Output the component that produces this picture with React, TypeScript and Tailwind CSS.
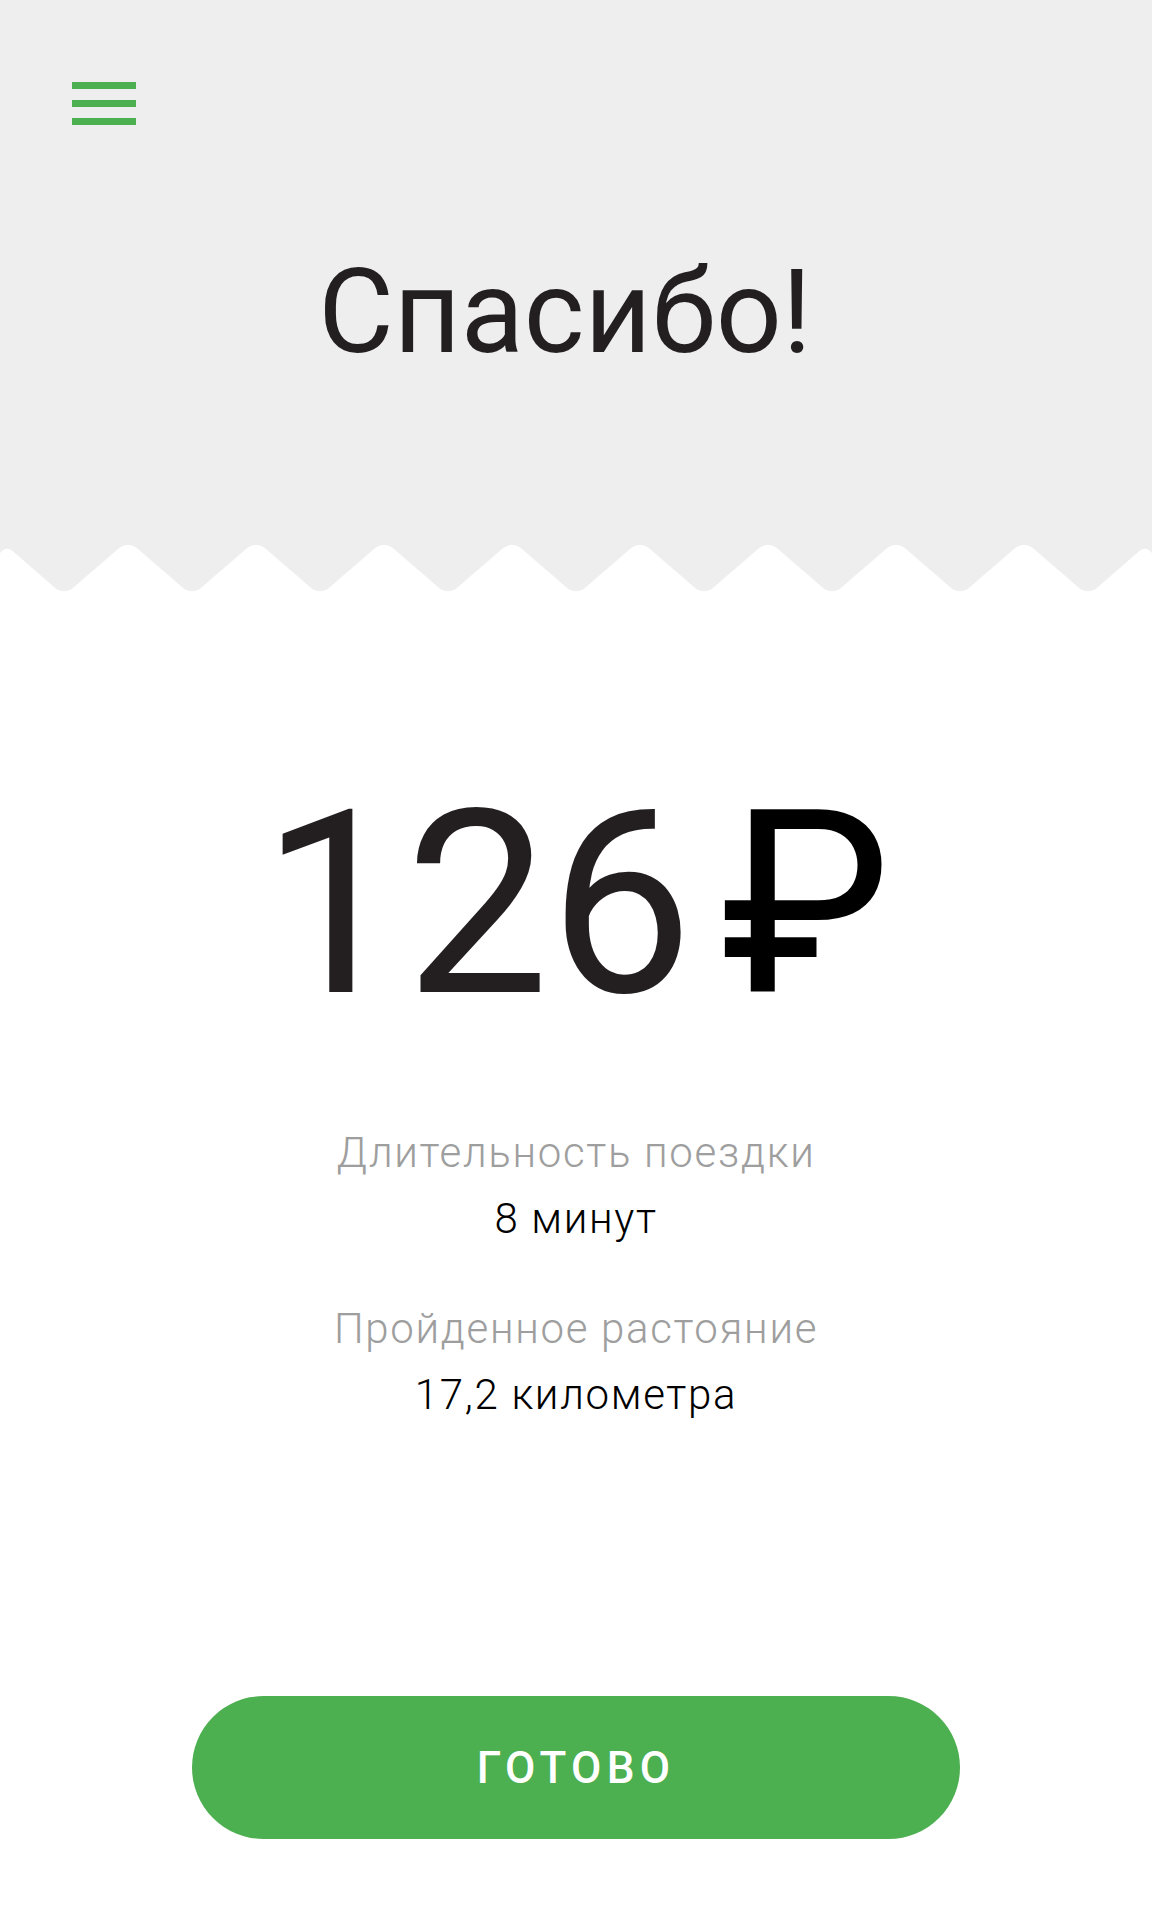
import React from 'react';

// zigzag edge between the grey header and the white receipt body
const buildEdge = (): string => {
  const d: string[] = ['M0,60', 'L0,13', 'Q6,6 12,10.5'];
  for (let k = 0; k < 9; k++) {
    const t = 64 + 128 * k;
    d.push(`L${t - 10},46.9`, `Q${t},55.5 ${t + 10},46.9`);
    if (k < 8) {
      const p = 128 * (k + 1);
      d.push(`L${p - 10},9.1`, `Q${p},0.5 ${p + 10},9.1`);
    }
  }
  d.push('L1140,10.5', 'Q1146,6 1152,13', 'L1152,60', 'Z');
  return d.join(' ');
};

const details = [
  { label: 'Длительность поездки', value: '8 минут' },
  { label: 'Пройденное растояние', value: '17,2 километра' },
];

const App: React.FC = () => {
  return (
    <div className="w-[1152px] min-h-[1920px] bg-white font-[Roboto,sans-serif] text-[#231f20]">
      <header className="h-[540px] bg-[#eeeeee] pt-[82px]">
        <button className="ml-[72px] flex flex-col gap-[11px]" aria-label="Меню">
          <span className="block h-[7px] w-[64px] bg-[#4caf50]"></span>
          <span className="block h-[7px] w-[64px] bg-[#4caf50]"></span>
          <span className="block h-[7px] w-[64px] bg-[#4caf50]"></span>
        </button>
        <h1 className="mt-[129px] pr-[22px] text-center text-[116px] leading-none font-normal">Спасибо!</h1>
      </header>

      <svg className="block bg-[#eeeeee]" width="1152" height="60" viewBox="0 0 1152 60">
        <path d={buildEdge()} fill="#ffffff" />
      </svg>

      <div className="mt-[177px] flex justify-center text-[256px] leading-none font-normal">
        <span>126</span>
        <span className="ml-[28px] text-black">₽</span>
      </div>

      <div className="mt-[87px] flex flex-col items-center gap-[44px] text-[42px] leading-[66px] font-light tracking-[0.04em]">
        {details.map((item) => (
          <div key={item.label} className="flex flex-col items-center">
            <span className="text-[#9e9e9e]">{item.label}</span>
            <span className="text-black">{item.value}</span>
          </div>
        ))}
      </div>

      <div className="mt-[268px] flex justify-center">
        <button className="h-[143px] w-[768px] rounded-full bg-[#4caf50] text-[44px] font-medium tracking-[0.12em] text-white">
          ГОТОВО
        </button>
      </div>
    </div>
  );
};

export default App;
